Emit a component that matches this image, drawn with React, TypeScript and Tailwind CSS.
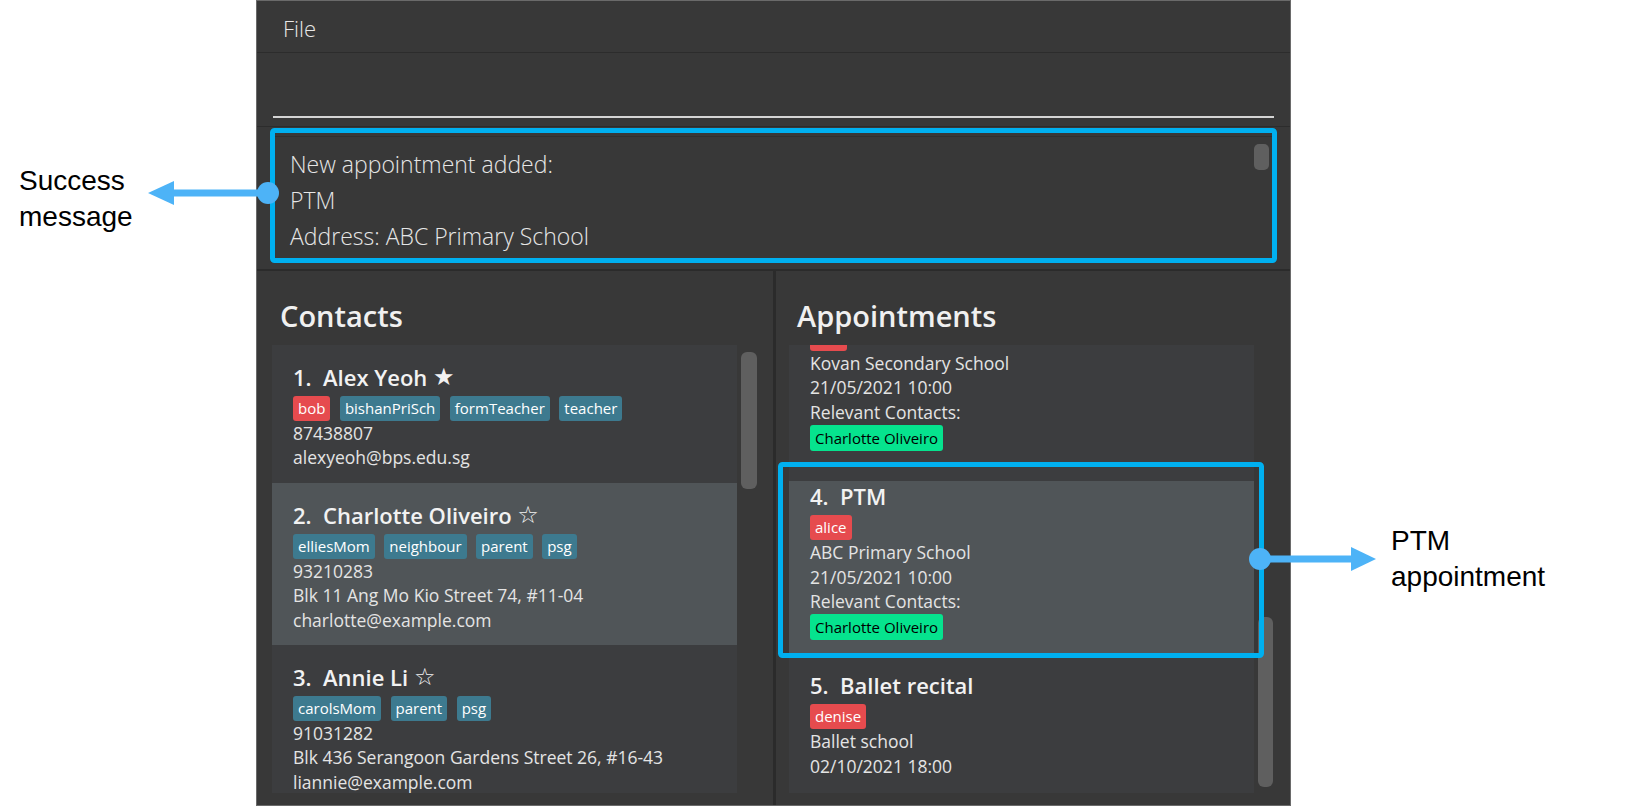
import React from "react";

type Contact = {
  index: number;
  name: string;
  starred: boolean;
  tags: { label: string; red?: boolean }[];
  lines: string[];
  selected?: boolean;
};

type Appointment = {
  index: number;
  title: string;
  tag: string;
  lines: string[];
  contacts: string[];
  selected?: boolean;
  scrolledPast?: boolean;
};

const CONTACTS: Contact[] = [
  {
    index: 1,
    name: "Alex Yeoh",
    starred: true,
    tags: [{ label: "bob", red: true }, { label: "bishanPriSch" }, { label: "formTeacher" }, { label: "teacher" }],
    lines: ["87438807", "alexyeoh@bps.edu.sg"],
  },
  {
    index: 2,
    name: "Charlotte Oliveiro",
    starred: false,
    tags: [{ label: "elliesMom" }, { label: "neighbour" }, { label: "parent" }, { label: "psg" }],
    lines: ["93210283", "Blk 11 Ang Mo Kio Street 74, #11-04", "charlotte@example.com"],
    selected: true,
  },
  {
    index: 3,
    name: "Annie Li",
    starred: false,
    tags: [{ label: "carolsMom" }, { label: "parent" }, { label: "psg" }],
    lines: ["91031282", "Blk 436 Serangoon Gardens Street 26, #16-43", "liannie@example.com"],
  },
];

const APPOINTMENTS: Appointment[] = [
  {
    index: 3,
    title: "",
    tag: "",
    lines: ["Kovan Secondary School", "21/05/2021 10:00"],
    contacts: ["Charlotte Oliveiro"],
    scrolledPast: true,
  },
  {
    index: 4,
    title: "PTM",
    tag: "alice",
    lines: ["ABC Primary School", "21/05/2021 10:00"],
    contacts: ["Charlotte Oliveiro"],
    selected: true,
  },
  {
    index: 5,
    title: "Ballet recital",
    tag: "denise",
    lines: ["Ballet school", "02/10/2021 18:00"],
    contacts: [],
  },
];

function Tag({ label, red }: { label: string; red?: boolean }) {
  return (
    <span
      className={`h-[25px] rounded-[3px] px-[5px] text-[15px] leading-[25px] font-medium text-white ${
        red ? "bg-[#e64b4e]" : "bg-[#3d7a8f]"
      }`}
    >
      {label}
    </span>
  );
}

function ContactCard({ c }: { c: Contact }) {
  return (
    <div className={`pt-[17px] pb-[13px] pl-[21px] ${c.selected ? "bg-[#505558]" : "bg-[#3c3d3f]"}`}>
      <div className="flex h-[30px] items-center whitespace-pre text-[22px] leading-[30px] font-semibold text-[#f2f2f2]">
        {`${c.index}.  ${c.name} `}
        <span className="font-['DejaVu_Sans',sans-serif] text-[24px] leading-none font-normal">
          {c.starred ? "★" : "☆"}
        </span>
      </div>
      <div className="mt-[4px] flex gap-[9.5px]">
        {c.tags.map((t) => (
          <Tag key={t.label} label={t.label} red={t.red} />
        ))}
      </div>
      {c.lines.map((l) => (
        <div key={l} className="text-[17.5px] leading-[24.4px] text-[#e4e4e4]">
          {l}
        </div>
      ))}
    </div>
  );
}

function AppointmentCard({ a }: { a: Appointment }) {
  return (
    <div className={`pb-[13px] pl-[21px] ${a.selected ? "bg-[#505558]" : "bg-[#3c3d3f]"}`}>
      {a.scrolledPast ? (
        // top of this card is scrolled out of view, only the tag's lower edge shows
        <div className="flex">
          <span className="h-[25px] w-[37px] rounded-[3px] bg-[#e64b4e]" />
        </div>
      ) : (
        <>
          <div className="h-[30px] mt-[17px] whitespace-pre text-[22px] leading-[30px] font-semibold text-[#f2f2f2]">
            {`${a.index}.  ${a.title}`}
          </div>
          <div className="mt-[4px] flex">
            <Tag label={a.tag} red />
          </div>
        </>
      )}
      {a.lines.map((l) => (
        <div key={l} className="text-[17.5px] leading-[24.4px] text-[#e4e4e4]">
          {l}
        </div>
      ))}
      {a.contacts.length > 0 && (
        <>
          <div className="text-[17.5px] leading-[24.4px] text-[#e4e4e4]">Relevant Contacts:</div>
          <div className="mt-[1px] flex">
            {a.contacts.map((n) => (
              <span
                key={n}
                className="h-[26px] rounded-[3px] bg-[#06e38e] px-[5px] text-[15px] leading-[26px] font-medium text-black"
              >
                {n}
              </span>
            ))}
          </div>
        </>
      )}
    </div>
  );
}

function Annotations() {
  return (
    <svg className="pointer-events-none absolute inset-0 h-full w-full" viewBox="0 0 1626 807">
      <rect x="272.5" y="130.5" width="1002" height="130" rx="2" fill="none" stroke="#00b0f0" strokeWidth="5" />
      <rect x="780.5" y="464.5" width="481" height="191" rx="2" fill="none" stroke="#00b0f0" strokeWidth="5" />
      <line x1="268" y1="193" x2="170" y2="193" stroke="#4db3f7" strokeWidth="7" />
      <polygon points="148,193 174,181 174,205" fill="#4db3f7" />
      <circle cx="268" cy="193" r="11" fill="#4db3f7" />
      <line x1="1260" y1="559" x2="1354" y2="559" stroke="#4db3f7" strokeWidth="7" />
      <polygon points="1376,559 1351,547 1351,571" fill="#4db3f7" />
      <circle cx="1260" cy="559" r="11" fill="#4db3f7" />
    </svg>
  );
}

export default function App() {
  return (
    <div className="relative flex h-[807px] w-[1626px] overflow-hidden bg-white font-['Open_Sans',sans-serif]">
      <div className="w-[256px] shrink-0 pt-[163px] pl-[19px] font-['Liberation_Sans',Arial,sans-serif] text-[28px] leading-[36px] text-black">
        Success
        <br />
        message
      </div>

      <div className="flex h-[806px] w-[1035px] shrink-0 flex-col border border-[#6a6a6a] bg-[#383838]">
        <div className="flex h-[52px] shrink-0 items-center border-b border-[#2c2c2c] pt-[3px] pl-[26px] text-[22px] font-light text-[#e8e8e8]">
          File
        </div>

        <div className="flex h-[74px] shrink-0 flex-col justify-end border-b border-[#2c2c2c] px-[16px] pb-[8px]">
          <div className="h-[2px] bg-[#d4d4d4]" />
        </div>

        <div className="h-[144px] shrink-0 border-b-2 border-[#2b2b2b] px-[15px] pt-[9px] pb-[8px]">
          <div className="flex h-full border border-[#2f2f2f] bg-[#383838]">
            <div className="flex-1 pt-[9px] pl-[17px] text-[23px] leading-[36px] font-light text-[#e6e6e6]">
              <div>New appointment added:</div>
              <div>PTM</div>
              <div>Address: ABC Primary School</div>
            </div>
            <div className="mt-[7px] mr-[5px] h-[26px] w-[15px] rounded-[5px] bg-[#5f5f5f]" />
          </div>
        </div>

        <div className="flex min-h-0 flex-1">
          <div className="flex w-[516px] shrink-0 flex-col pt-[25px] pb-[12px] pl-[15px] pr-[16px]">
            <div className="mb-[9px] h-[40px] pl-[8px] text-[29px] leading-[40px] font-semibold text-[#f0f0f0]">
              Contacts
            </div>
            <div className="flex min-h-0 flex-1 gap-[4px]">
              <div className="w-[465px] overflow-hidden bg-[#3c3d3f]">
                {CONTACTS.map((c) => (
                  <ContactCard key={c.index} c={c} />
                ))}
              </div>
              <div className="mt-[7px] h-[137px] w-[16px] rounded-[6px] bg-[#5f5f5f]" />
            </div>
          </div>

          <div className="w-[3px] shrink-0 bg-[#2b2b2b]" />

          <div className="flex flex-1 flex-col pt-[25px] pb-[12px] pl-[13px] pr-[16px]">
            <div className="mb-[9px] h-[40px] pl-[8px] text-[29px] leading-[40px] font-semibold text-[#f0f0f0]">
              Appointments
            </div>
            <div className="flex min-h-0 flex-1 gap-[4px]">
              <div className="w-[465px] overflow-hidden bg-[#3c3d3f]">
                <div className="-mt-[19px]">
                  {APPOINTMENTS.map((a) => (
                    <AppointmentCard key={a.index} a={a} />
                  ))}
                </div>
              </div>
              <div className="mt-[272px] h-[170px] w-[15px] rounded-[6px] bg-[#5f5f5f]" />
            </div>
          </div>
        </div>
      </div>

      <div className="flex-1 pt-[523px] pl-[100px] font-['Liberation_Sans',Arial,sans-serif] text-[28px] leading-[36px] text-black">
        PTM
        <br />
        appointment
      </div>

      <Annotations />
    </div>
  );
}
